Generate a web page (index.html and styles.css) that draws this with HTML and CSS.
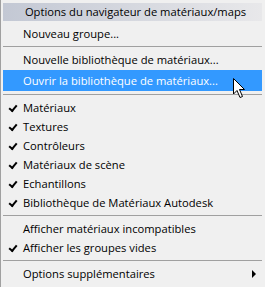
FILE: index.html
```html
<!DOCTYPE html>
<html lang="fr">
<head>
  <meta charset="UTF-8">
  <title>Options du navigateur</title>
  <link rel="stylesheet" href="styles.css">
</head>
<body>

<div class="menu">
  <div class="menu-title">Options du navigateur de matériaux/maps</div>
  <div class="item">Nouveau groupe...</div>
  <div class="sep"></div>
  <div class="item">Nouvelle bibliothèque de matériaux...</div>
  <div class="item active">Ouvrir la bibliothèque de matériaux...</div>
  <div class="sep"></div>
  <div class="item checked">Matériaux</div>
  <div class="item checked">Textures</div>
  <div class="item checked">Contrôleurs</div>
  <div class="item checked">Matériaux de scène</div>
  <div class="item checked">Echantillons</div>
  <div class="item checked">Bibliothèque de Matériaux Autodesk</div>
  <div class="sep"></div>
  <div class="item">Afficher matériaux incompatibles</div>
  <div class="item checked">Afficher les groupes vides</div>
  <div class="sep"></div>
  <div class="item sub">Options supplémentaires</div>

  <!-- pointeur de souris -->
  <svg class="cursor" width="14" height="21" viewBox="0 0 14 21">
    <path d="M0.5 0.5 L0.5 16 L4 12.5 L7 19.5 L9.5 18.5 L6.5 11.5 L11.5 11.5 Z" fill="#fff" stroke="#000" stroke-width="1" stroke-linejoin="miter"/>
  </svg>
</div>

</body>
</html>
```

FILE: styles.css
```css
body { margin: 0; background: #f0f0f0; font-family: "Open Sans", "Noto Sans", sans-serif; font-size: 11.2px; color: #000; }
.menu { position: relative; width: 262px; height: 287px; border-left: 1px solid #a0a0a0; padding: 3px 0 0 2px; box-sizing: border-box; }
.menu-title { height: 18px; line-height: 17px; text-align: center; background: linear-gradient(to right, #c3c8d4, #e8e8ea); padding-left: 6px; margin-bottom: 3px; }
.item { position: relative; height: 19px; line-height: 19px; padding-left: 20px; }
.item.active { background: #3399ff; color: #fff; height: 21px; line-height: 21px; margin: 1px 0; }
.item.checked::before { content: ""; position: absolute; left: 6px; top: 7px; width: 6px; height: 3px; border-left: 2px solid #000; border-bottom: 2px solid #000; transform: rotate(-50deg); }
.item.sub::after { content: ""; position: absolute; right: 6px; top: 6px; border-left: 4px solid #000; border-top: 4px solid transparent; border-bottom: 4px solid transparent; }
.sep { height: 1px; background: #a0a0a0; margin: 3px 0; }
.cursor { position: absolute; left: 232px; top: 78px; }
```
